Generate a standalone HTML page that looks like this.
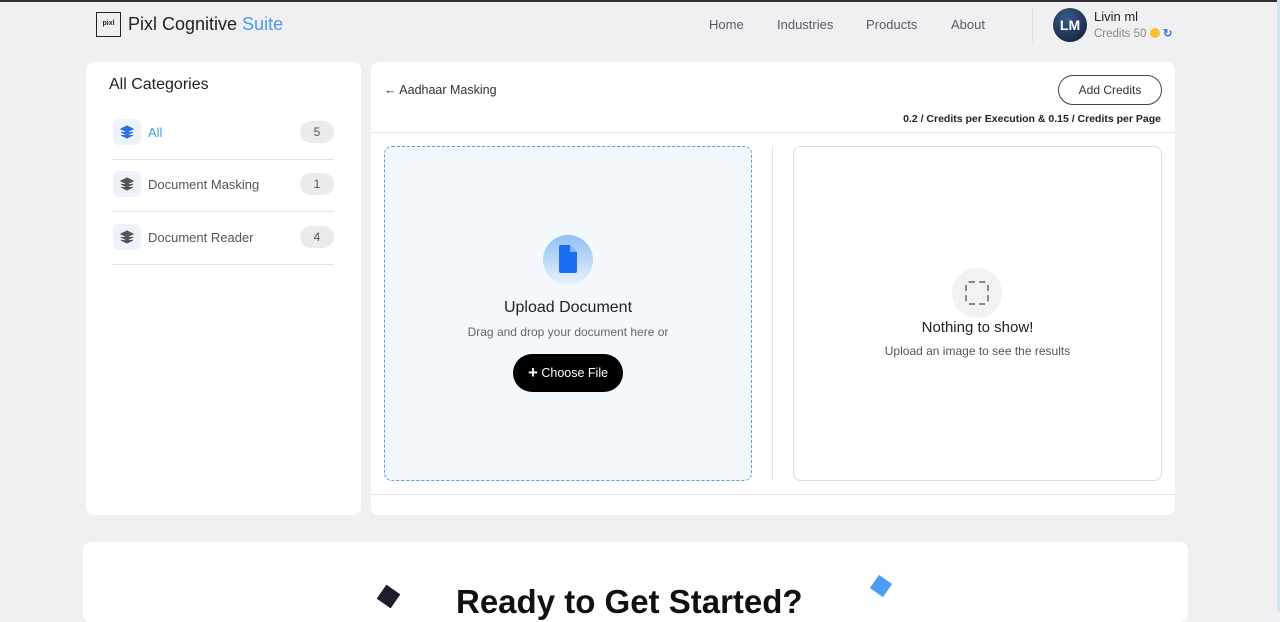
<!DOCTYPE html>
<html><head><meta charset="utf-8"><style>
*{box-sizing:border-box;margin:0;padding:0}
body{width:1280px;height:612px;overflow:hidden;background:#f0f0f2;font-family:"Liberation Sans",sans-serif;position:relative;color:#1f1f1f}
.a{position:absolute}
.card{background:#fff;border-radius:8px}
.nav{font-size:13px;color:#555b66;top:17px}
.cat{left:112px;width:222px;height:53px;border-bottom:1px solid #e4e4e6}
.ic{position:absolute;left:1px;top:12px;width:28px;height:26px;background:#edf2fb;border-radius:6px}
.ic svg{position:absolute;left:7px;top:6px}
.cnt{position:absolute;right:0;top:14px;width:34px;height:22px;border-radius:11px;background:#ebebeb;font-size:12px;color:#555;text-align:center;line-height:22px}
.lbl{position:absolute;left:36px;top:18px;font-size:13px;color:#555}
</style></head><body>
<div class="a" style="left:0;top:0;width:1280px;height:2px;background:#333"></div>
<div class="a" style="right:0;top:0;width:3px;height:612px;background:#cfe6ef"></div>
<div class="a" style="left:96px;top:12px;width:25px;height:25px;border:1.5px solid #222;font-size:7px;text-align:center;line-height:22px;font-weight:bold">pixl</div>
<div class="a" style="left:128px;top:14px;font-size:18px;color:#222">Pixl Cognitive <span style="color:#4a9bf0">Suite</span></div>
<div class="a nav" style="left:709px">Home</div>
<div class="a nav" style="left:777px">Industries</div>
<div class="a nav" style="left:866px">Products</div>
<div class="a nav" style="left:951px">About</div>
<div class="a" style="left:1032px;top:8px;width:1px;height:34px;background:#ddd"></div>
<div class="a" style="left:1053px;top:8px;width:34px;height:34px;border-radius:50%;background:radial-gradient(circle at 40% 30%,#3a5a8a,#0f1a2e);color:#fff;font-size:14px;text-align:center;line-height:34px;font-weight:bold">LM</div>
<div class="a" style="left:1094px;top:9px;font-size:13px;color:#222">Livin ml</div>
<div class="a" style="left:1094px;top:26px;font-size:11.5px;color:#888">Credits 50 <span style="display:inline-block;width:10px;height:10px;border-radius:50%;background:#f6c235;vertical-align:-1px"></span> <span style="color:#2d7be5;font-weight:bold">↻</span></div>

<div class="a card" style="left:86px;top:62px;width:275px;height:453px"></div>
<div class="a" style="left:109px;top:76px;font-size:16px;color:#222">All Categories</div>
<div class="a cat" style="top:107px"><div class="ic"><svg width="14" height="14" viewBox="0 0 14 14"><path d="M7 1L13 4 7 7 1 4Z M1 7l6 3 6-3 M1 10l6 3 6-3" fill="#2f6fe0" stroke="#2f6fe0" stroke-width="1.2"/></svg></div><div class="lbl" style="color:#4a9bf0">All</div><div class="cnt">5</div></div>
<div class="a cat" style="top:159px"><div class="ic"><svg width="14" height="14" viewBox="0 0 14 14"><path d="M7 1L13 4 7 7 1 4Z M1 7l6 3 6-3 M1 10l6 3 6-3" fill="#555" stroke="#555" stroke-width="1.2"/></svg></div><div class="lbl">Document Masking</div><div class="cnt">1</div></div>
<div class="a cat" style="top:212px"><div class="ic"><svg width="14" height="14" viewBox="0 0 14 14"><path d="M7 1L13 4 7 7 1 4Z M1 7l6 3 6-3 M1 10l6 3 6-3" fill="#555" stroke="#555" stroke-width="1.2"/></svg></div><div class="lbl">Document Reader</div><div class="cnt">4</div></div>

<div class="a card" style="left:371px;top:62px;width:804px;height:453px"></div>
<div class="a" style="left:384px;top:83px;font-size:12.5px;color:#333">← Aadhaar Masking</div>
<div class="a" style="left:1058px;top:75px;width:104px;height:30px;border:1px solid #444;border-radius:15px;font-size:12px;text-align:center;line-height:28px;color:#333">Add Credits</div>
<div class="a" style="left:880px;top:113px;width:281px;text-align:right;font-size:10.5px;color:#222;font-weight:bold">0.2 / Credits per Execution &amp; 0.15 / Credits per Page</div>
<div class="a" style="left:371px;top:132px;width:804px;height:1px;background:#e4e4e6"></div>
<div class="a" style="left:371px;top:494px;width:804px;height:1px;background:#e4e4e6"></div>
<div class="a" style="left:384px;top:146px;width:368px;height:335px;border:1.5px dashed #5a9ee0;border-radius:8px;background:#f3f8fd"></div>
<div class="a" style="left:543px;top:235px;width:50px;height:50px;border-radius:50%;background:linear-gradient(#8fc0f5,#e8f2fc)"></div>
<svg class="a" style="left:558px;top:245px" width="20" height="28" viewBox="0 0 20 28"><path d="M1 2a2 2 0 0 1 2-2h9l7 7v19a2 2 0 0 1-2 2H3a2 2 0 0 1-2-2Z" fill="#1a6df0"/><path d="M12 0v7h7" fill="#7fb2f6"/></svg>
<div class="a" style="left:384px;top:299px;width:368px;text-align:center;font-size:16px;color:#222">Upload Document</div>
<div class="a" style="left:384px;top:325px;width:368px;text-align:center;font-size:12px;color:#666">Drag and drop your document here or</div>
<div class="a" style="left:513px;top:354px;width:110px;height:38px;border-radius:19px;background:#000;color:#fff;font-size:12.5px;text-align:center;line-height:38px"><b style="font-size:17px;vertical-align:-1px">+</b> Choose File</div>
<div class="a" style="left:772px;top:146px;width:1px;height:335px;background:#e4e4e6"></div>
<div class="a" style="left:793px;top:146px;width:369px;height:335px;border:1px solid #dcdcdf;border-radius:8px"></div>
<div class="a" style="left:952px;top:268px;width:50px;height:50px;border-radius:50%;background:#f2f2f2"></div>
<div class="a" style="left:965px;top:281px;width:24px;height:24px;border:2px dashed #888;border-radius:4px"></div>
<div class="a" style="left:793px;top:319px;width:369px;text-align:center;font-size:15px;color:#222">Nothing to show!</div>
<div class="a" style="left:793px;top:344px;width:369px;text-align:center;font-size:12px;color:#555">Upload an image to see the results</div>

<div class="a card" style="left:83px;top:542px;width:1105px;height:80px"></div>
<div class="a" style="left:380px;top:588px;width:17px;height:17px;background:#1e1e2a;transform:rotate(35deg)"></div>
<div class="a" style="left:873px;top:578px;width:16px;height:16px;background:#4b9ef3;transform:rotate(35deg)"></div>
<div class="a" style="left:456px;top:583px;font-size:33px;font-weight:bold;color:#111">Ready to Get Started?</div>
</body></html>
